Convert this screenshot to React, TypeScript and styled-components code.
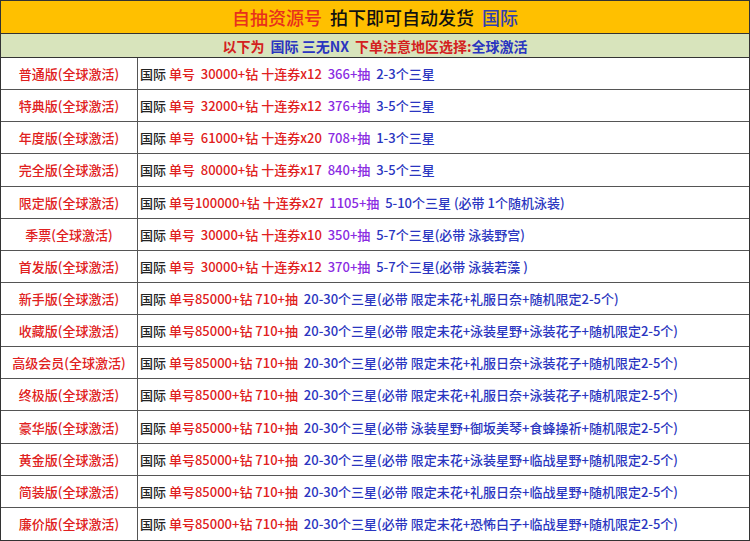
import styled, { createGlobalStyle } from "styled-components";

const Global = createGlobalStyle`
  body { margin: 0; font-family: "Noto Sans CJK SC", "Noto Sans", sans-serif; background: #fff; }
`;

const Table = styled.div`
  width: 750px;
  height: 541px;
  display: grid;
  grid-template-rows: 33px 24px repeat(15, 1fr);
  box-sizing: border-box;
  border: 1px solid #333;
`;

const Title = styled.div`
  background: #ffc000;
  display: flex;
  align-items: center;
  justify-content: center;
  gap: 8px;
  font-size: 18px;
  font-weight: 500;
  color: #111;
  border-bottom: 1px solid #333;
`;

const Sub = styled.div`
  background: #d8e4bc;
  display: flex;
  align-items: center;
  justify-content: center;
  gap: 6px;
  font-size: 14px;
  font-weight: bold;
  color: #d42020;
  border-bottom: 1px solid #333;
`;

const Row = styled.div`
  display: grid;
  grid-template-columns: 137px 1fr;
  border-bottom: 1px solid #555;
  &:last-child { border-bottom: none; }
`;

const Name = styled.div`
  display: flex;
  align-items: center;
  justify-content: center;
  color: #e02020;
  font-size: 13px;
  font-weight: 500;
  border-right: 1px solid #555;
`;

const Detail = styled.div`
  display: flex;
  align-items: center;
  padding-left: 2px;
  font-size: 13px;
  font-weight: 500;
  color: #222;
  white-space: pre;
`;

const C = styled.span<{ $c: string }>`
  color: ${(p) => p.$c};
`;

const RED = "#e02020";
const BLUE = "#2a35c0";
const PURPLE = "#8a2be2";

type R = [string, string, string, string];
const rows: R[] = [
  ["普通版(全球激活)", " 单号  30000+钻 十连券x12 ", " 366+抽 ", " 2-3个三星"],
  ["特典版(全球激活)", " 单号  32000+钻 十连券x12 ", " 376+抽 ", " 3-5个三星"],
  ["年度版(全球激活)", " 单号  61000+钻 十连券x20 ", " 708+抽 ", " 1-3个三星"],
  ["完全版(全球激活)", " 单号  80000+钻 十连券x17 ", " 840+抽 ", " 3-5个三星"],
  ["限定版(全球激活)", " 单号100000+钻 十连券x27 ", " 1105+抽 ", " 5-10个三星 (必带 1个随机泳装)"],
  ["季票(全球激活)", " 单号  30000+钻 十连券x10 ", " 350+抽 ", " 5-7个三星(必带 泳装野宫)"],
  ["首发版(全球激活)", " 单号  30000+钻 十连券x12 ", " 370+抽 ", " 5-7个三星(必带 泳装若藻 )"],
  ["新手版(全球激活)", " 单号85000+钻 710+抽 ", "", " 20-30个三星(必带 限定未花+礼服日奈+随机限定2-5个)"],
  ["收藏版(全球激活)", " 单号85000+钻 710+抽 ", "", " 20-30个三星(必带 限定未花+泳装星野+泳装花子+随机限定2-5个)"],
  ["高级会员(全球激活)", " 单号85000+钻 710+抽 ", "", " 20-30个三星(必带 限定未花+礼服日奈+泳装花子+随机限定2-5个)"],
  ["终极版(全球激活)", " 单号85000+钻 710+抽 ", "", " 20-30个三星(必带 限定未花+礼服日奈+泳装花子+随机限定2-5个)"],
  ["豪华版(全球激活)", " 单号85000+钻 710+抽 ", "", " 20-30个三星(必带 泳装星野+御坂美琴+食蜂操祈+随机限定2-5个)"],
  ["黄金版(全球激活)", " 单号85000+钻 710+抽 ", "", " 20-30个三星(必带 限定未花+泳装星野+临战星野+随机限定2-5个)"],
  ["简装版(全球激活)", " 单号85000+钻 710+抽 ", "", " 20-30个三星(必带 限定未花+礼服日奈+临战星野+随机限定2-5个)"],
  ["廉价版(全球激活)", " 单号85000+钻 710+抽 ", "", " 20-30个三星(必带 限定未花+恐怖白子+临战星野+随机限定2-5个)"],
];

export default function App() {
  return (
    <>
      <Global />
      <Table>
        <Title>
          <C $c="#e8301c">自抽资源号</C>
          <span>拍下即可自动发货</span>
          <C $c="#3040b0">国际</C>
        </Title>
        <Sub>
          <span>以下为</span>
          <C $c={BLUE}>国际 三无NX</C>
          <span>
            下单注意地区选择:<C $c={BLUE}>全球激活</C>
          </span>
        </Sub>
        {rows.map(([name, red, purple, blue]) => (
          <Row key={name}>
            <Name>{name}</Name>
            <Detail>
              国际<C $c={RED}>{red}</C>
              {purple && <C $c={PURPLE}>{purple}</C>}
              <C $c={BLUE}>{blue}</C>
            </Detail>
          </Row>
        ))}
      </Table>
    </>
  );
}
